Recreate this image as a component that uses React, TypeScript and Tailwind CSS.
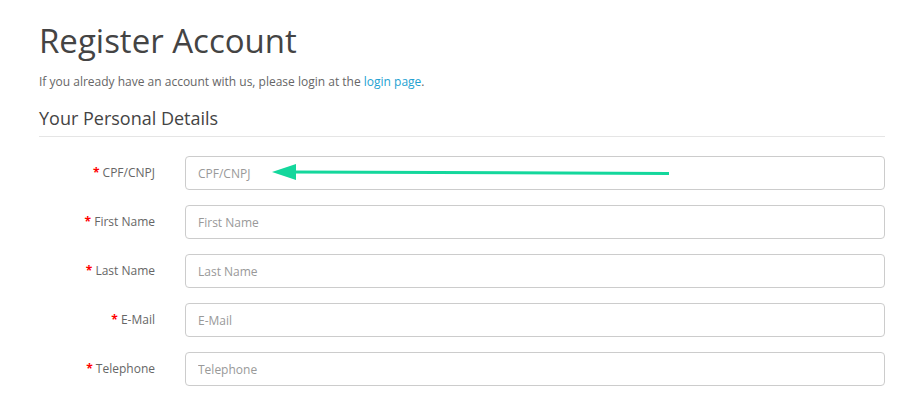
import React from "react";

const fields = [
  { label: "CPF/CNPJ" },
  { label: "First Name" },
  { label: "Last Name" },
  { label: "E-Mail" },
  { label: "Telephone" },
];

export default function App() {
  return (
    <div className="relative w-[897px] h-[404px] overflow-hidden bg-white font-['Open_Sans',sans-serif]">
      <div className="pl-[39px] pr-[12px] pt-[23px]">
        <h1 className="m-0 text-[33px] leading-[1.1] font-normal text-[#444]">Register Account</h1>
        <p className="mt-[13px] text-[12px] leading-[20px] text-[#666]">
          If you already have an account with us, please login at the{" "}
          <a className="text-[#23a1d1]">login page</a>.
        </p>
        <div className="mt-[7px] border-b border-[#e5e5e5] pt-[7px] pb-[5px] text-[18px] leading-[1.4] text-[#444]">
          Your Personal Details
        </div>
        <div className="mt-[19px] flex flex-col gap-[15px]">
          {fields.map((f) => (
            <div key={f.label} className="flex items-center">
              <div className="w-[116px] text-right text-[12px] text-[#666]">
                <span className="text-[#f00] font-bold">* </span>
                {f.label}
              </div>
              <input
                className="ml-[30px] flex-1 h-[34px] rounded-[4px] border border-[#ccc] px-[12px] text-[12px] text-[#555] placeholder:text-[#999] outline-none"
                placeholder={f.label}
              />
            </div>
          ))}
        </div>
      </div>
      <svg className="absolute left-0 top-0" width="897" height="404">
        <line x1="292" y1="172" x2="669" y2="173.5" stroke="#14d79c" strokeWidth="3" />
        <polygon points="272,172 296,164 296,180" fill="#14d79c" />
      </svg>
    </div>
  );
}
